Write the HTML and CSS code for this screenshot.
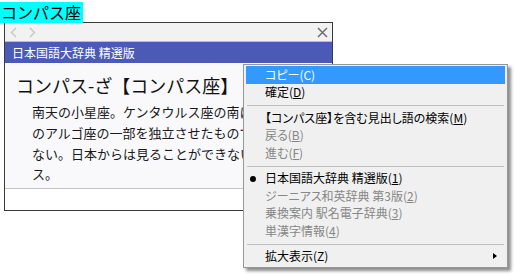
FILE: index.html
```html
<!DOCTYPE html>
<html lang="ja">
<head>
<meta charset="utf-8">
<title>コンパス座</title>
<link rel="stylesheet" href="styles.css">
</head>
<body>
<div class="sel"><span class="sel-text">コンパス座</span></div>
<div class="window">
  <div class="toolbar">
    <svg class="nav" width="8" height="11" viewBox="0 0 8 11"><polyline points="6,1 1.5,5.5 6,10" fill="none" stroke="#c4c4c4" stroke-width="1.3"/></svg>
    <svg class="nav" width="8" height="11" viewBox="0 0 8 11"><polyline points="2,1 6.5,5.5 2,10" fill="none" stroke="#c4c4c4" stroke-width="1.3"/></svg>
    <span class="spacer"></span>
    <svg class="close" width="11" height="11" viewBox="0 0 11 11"><path d="M1 1 L10 10 M10 1 L1 10" stroke="#6f6f6f" stroke-width="1.5"/></svg>
  </div>
  <div class="dictbar">日本国語大辞典 精選版</div>
  <div class="content">
    <h1 class="headword">コンパス-ざ【コンパス座】</h1>
    <p class="desc">南天の小星座。ケンタウルス座の南にある。もとのアルゴ座の一部を独立させたもので、輝く星はない。日本からは見ることができない。ピクシス。</p>
  </div>
  <div class="status"></div>
</div>

<div class="menu">
  <div class="item active">コピー(C)</div>
  <div class="item">確定(<u>D</u>)</div>
  <div class="sep"></div>
  <div class="item">【コンパス座】を含む見出し語の検索(<u>M</u>)</div>
  <div class="item disabled">戻る(<u>B</u>)</div>
  <div class="item disabled">進む(<u>F</u>)</div>
  <div class="sep"></div>
  <div class="item"><span class="bullet"></span>日本国語大辞典 精選版(<u>1</u>)</div>
  <div class="item disabled">ジーニアス和英辞典 第3版(<u>2</u>)</div>
  <div class="item disabled">乗換案内 駅名電子辞典(<u>3</u>)</div>
  <div class="item disabled">単漢字情報(<u>4</u>)</div>
  <div class="sep"></div>
  <div class="item">拡大表示(Z)<span class="arrow"></span></div>
</div>
</body>
</html>
```

FILE: styles.css
```css
html, body {
  margin: 0;
  padding: 0;
  background: #ffffff;
}
body {
  font-family: "Noto Sans CJK JP", "Noto Sans", sans-serif;
  color: #000;
  position: relative;
  width: 514px;
  height: 275px;
  overflow: hidden;
}
.sel {
  height: 21px;
}
.sel-text {
  display: inline-block;
  background: #00ffff;
  font-size: 16px;
  line-height: 21px;
  padding: 0 2px 0 1px;
  height: 21px;
}
.window {
  box-sizing: border-box;
  width: 329px;
  margin: 1px 0 0 4px;
  border: 1px solid #3a3a3a;
  background: #ffffff;
}
.toolbar {
  display: flex;
  align-items: center;
  height: 18px;
  padding: 0 4px 0 5px;
  background: #f2f2f2;
  border-bottom: 1px solid #bdbdbd;
}
.nav {
  margin-right: 10px;
  margin-top: 1px;
}
.spacer {
  flex: 1;
}
.close {
  margin-top: 1px;
}
.dictbar {
  height: 21px;
  line-height: 21px;
  background: #4a5ab6;
  color: #ffffff;
  font-size: 12px;
  padding-left: 7px;
}
.content {
  background: #f9f9fc;
  padding: 10px 12px 3px 11px;
  border-bottom: 1px solid #c4c4c4;
}
.headword {
  margin: 0;
  font-size: 18px;
  font-weight: normal;
  line-height: 24px;
  color: #111;
}
.desc {
  margin: 5px 0 0 16px;
  font-size: 13px;
  line-height: 20.8px;
  color: #1a1a1a;
}
.status {
  height: 21px;
  background: #ffffff;
}
.menu {
  position: absolute;
  left: 243px;
  top: 64px;
  width: 265px;
  box-sizing: border-box;
  background: #f0f0f0;
  border: 1px solid #979797;
  padding: 1px 2px 2px 2px;
  box-shadow: 3px 3px 3px rgba(0, 0, 0, 0.45);
  font-size: 12px;
  font-feature-settings: "palt";
}
.item {
  display: flex;
  align-items: center;
  height: 17.5px;
  line-height: 14px;
  padding-left: 19px;
  padding-right: 8px;
  position: relative;
  white-space: nowrap;
}
.item u {
  text-underline-offset: 1px;
}
.item.active {
  background: #3399ff;
  color: #ffffff;
}
.item.disabled {
  color: #868686;
}
.sep {
  height: 8px;
  box-sizing: border-box;
  padding-top: 4px;
  margin: 0 1px;
}
.sep::before {
  content: "";
  display: block;
  border-top: 1px solid #bfbfbf;
}
.bullet {
  position: absolute;
  left: 4px;
  top: 6px;
  width: 6px;
  height: 6px;
  border-radius: 50%;
  background: #000;
}
.arrow {
  margin-left: auto;
  width: 0;
  height: 0;
  border-top: 3.5px solid transparent;
  border-bottom: 3.5px solid transparent;
  border-left: 4px solid #000;
}
```
